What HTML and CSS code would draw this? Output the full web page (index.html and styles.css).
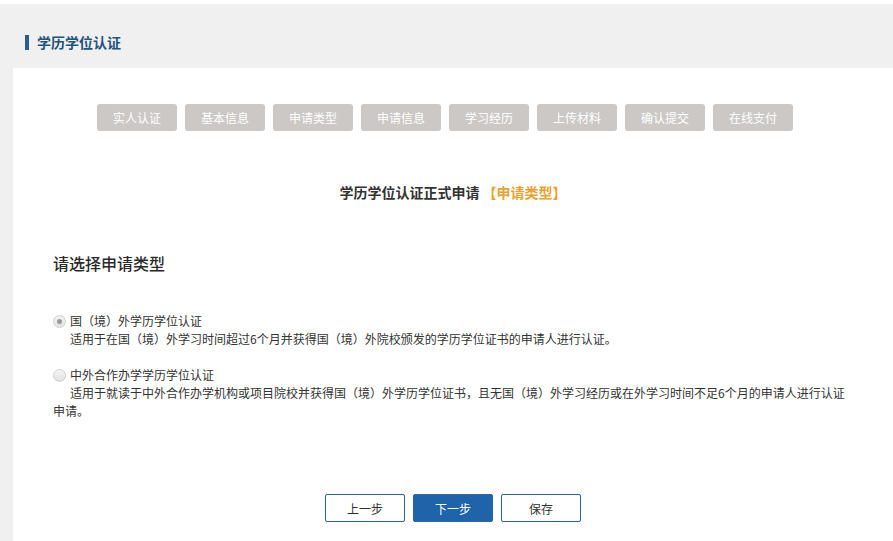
FILE: index.html
```html
<!DOCTYPE html>
<html lang="zh-CN">
<head>
  <meta charset="UTF-8">
  <meta name="viewport" content="width=device-width, initial-scale=1.0">
  <title>学历学位认证</title>
  <link rel="stylesheet" href="styles.css">
</head>
<body>
  <!-- Page header -->
  <header class="page-head">
    <h2>学历学位认证</h2>
  </header>

  <!-- Main panel -->
  <main class="panel">
    <ul class="steps">
      <li>实人认证</li>
      <li>基本信息</li>
      <li>申请类型</li>
      <li>申请信息</li>
      <li>学习经历</li>
      <li>上传材料</li>
      <li>确认提交</li>
      <li>在线支付</li>
    </ul>

    <h3 class="form-title">学历学位认证正式申请 <span class="hl">【申请类型】</span></h3>

    <h4 class="section-title">请选择申请类型</h4>

    <div class="options">
      <label class="option">
        <span class="option-head"><span class="radio checked"></span>国（境）外学历学位认证</span>
        <p>适用于在国（境）外学习时间超过6个月并获得国（境）外院校颁发的学历学位证书的申请人进行认证。</p>
      </label>
      <label class="option">
        <span class="option-head"><span class="radio"></span>中外合作办学学历学位认证</span>
        <p>适用于就读于中外合作办学机构或项目院校并获得国（境）外学历学位证书，且无国（境）外学习经历或在外学习时间不足6个月的申请人进行认证申请。</p>
      </label>
    </div>

    <div class="actions">
      <button class="btn">上一步</button>
      <button class="btn primary">下一步</button>
      <button class="btn">保存</button>
    </div>
  </main>
</body>
</html>
```

FILE: styles.css
```css
* {
  margin: 0;
  padding: 0;
  box-sizing: border-box;
  font-family: 'Noto Sans CJK SC', 'Liberation Sans', sans-serif;
}

body {
  background: #f0f0f0;
  color: #333;
  font-size: 12px;
  border-top: 4px solid #fff;
  padding-left: 13px;
  min-height: 100vh;
  display: flex;
  flex-direction: column;
}

.page-head {
  height: 64px;
  display: flex;
  align-items: center;
  padding: 12px 0 0 12px;
}

.page-head h2 {
  font-size: 14px;
  font-weight: bold;
  color: #24537e;
  border-left: 4px solid #2b5d88;
  padding-left: 8px;
  line-height: 15px;
}

.panel {
  flex: 1;
  background: #fff;
  padding: 36px 40px 20px;
}

.steps {
  list-style: none;
  display: flex;
  justify-content: center;
  gap: 8px;
  padding-right: 16px;
}

.steps li {
  width: 80px;
  height: 27px;
  line-height: 27px;
  text-align: center;
  background: #cbc8c6;
  color: #fff;
  font-size: 12px;
  border-radius: 3px;
}

.form-title {
  margin-top: 51px;
  text-align: center;
  font-size: 14px;
  font-weight: bold;
  line-height: 20px;
  color: #333;
}

.form-title .hl {
  color: #e7a230;
}

.section-title {
  margin-top: 49px;
  font-size: 16px;
  font-weight: 500;
  line-height: 24px;
  color: #2b2b2b;
}

.options {
  margin-top: 37px;
  display: flex;
  flex-direction: column;
  gap: 18px;
}

.option {
  display: block;
  line-height: 18px;
  font-size: 12px;
  color: #333;
}

.option-head {
  display: flex;
  align-items: center;
}

.radio {
  width: 13px;
  height: 13px;
  border-radius: 50%;
  border: 1px solid #cfcfcf;
  background: linear-gradient(#f4f4f4, #e2e2e2);
  margin-right: 4px;
  display: flex;
  align-items: center;
  justify-content: center;
}

.radio.checked::after {
  content: "";
  width: 5px;
  height: 5px;
  border-radius: 50%;
  background: #9a9a9a;
}

.option p {
  text-indent: 17px;
}

.actions {
  margin-top: 74px;
  display: flex;
  justify-content: center;
  gap: 8px;
}

.btn {
  width: 80px;
  height: 28px;
  background: #fff;
  border: 1px solid #2c64a4;
  border-radius: 2px;
  color: #333;
  font-size: 12px;
  cursor: pointer;
}

.btn.primary {
  background: #1f63ab;
  color: #fff;
}
```
